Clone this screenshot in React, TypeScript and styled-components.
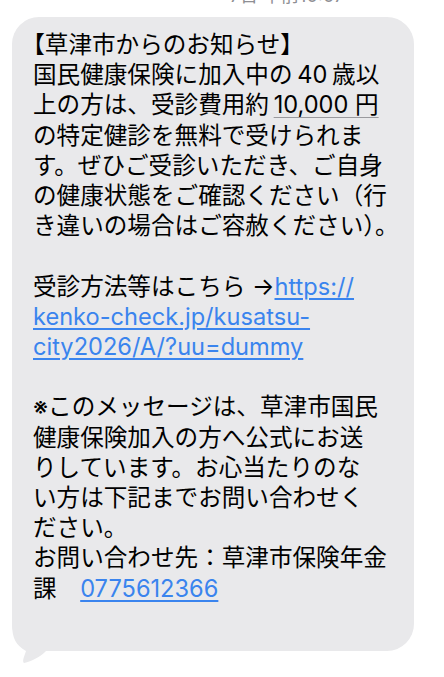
import React from 'react';
import styled, { createGlobalStyle } from 'styled-components';

const GlobalStyle = createGlobalStyle`
  html, body {
    margin: 0;
    padding: 0;
    background: #ffffff;
  }
  body {
    font-family: Inter, "Noto Sans CJK JP", sans-serif;
    -webkit-font-smoothing: antialiased;
  }
`;

const Screen = styled.div`
  width: 444px;
  height: 677px;
  overflow: hidden;
  background: #ffffff;
  display: flex;
  flex-direction: column;
`;

const Timestamp = styled.div`
  height: 5px;
  overflow: hidden;
  display: flex;
  justify-content: center;
  align-items: flex-end;
  padding-left: 130px;
  font-size: 18px;
  line-height: 18px;
  color: #8e8e93;
  margin-bottom: 12px;
`;

const Row = styled.div`
  padding: 0 30px 0 12px;
`;

const Bubble = styled.div`
  position: relative;
  background: #e9e9eb;
  border-radius: 27px;
  padding: 13px 18px 47px 21px;
  color: #000000;
  font-size: 23.6px;
  line-height: 30.2px;
`;

const Tail = styled.svg`
  position: absolute;
  left: 0;
  bottom: -12px;
  width: 50px;
  height: 40px;
`;

const Line = styled.div<{ $trim?: boolean }>`
  white-space: nowrap;
  min-height: 30.2px;
  margin-left: ${(p) => (p.$trim ? '-0.5em' : '0')};
`;

const Num = styled.span<{ $underline?: boolean }>`
  padding: 0 0.2em;
  ${(p) =>
    p.$underline &&
    `
    text-decoration: underline;
    text-decoration-color: #9a9a9e;
    text-decoration-thickness: 1px;
    text-underline-offset: 4px;
  `}
`;

const Link = styled.a`
  color: #3a84ee;
  text-decoration: underline;
  text-decoration-thickness: 1.5px;
  text-underline-offset: 3px;
`;

export default function App() {
  return (
    <>
      <GlobalStyle />
      <Screen>
        <Timestamp>7日 午前10:07</Timestamp>
        <Row>
          <Bubble>
            <Line $trim>【草津市からのお知らせ】</Line>
            <Line>
              国民健康保険に加入中の<Num>40</Num>歳以
            </Line>
            <Line>
              上の方は、受診費用約<Num $underline>10,000 円</Num>
            </Line>
            <Line>の特定健診を無料で受けられま</Line>
            <Line>す。ぜひご受診いただき、ご自身</Line>
            <Line>の健康状態をご確認ください（行</Line>
            <Line>き違いの場合はご容赦ください）。</Line>
            <Line />
            <Line>
              受診方法等はこちら →<Link>https://</Link>
            </Line>
            <Line>
              <Link>kenko-check.jp/kusatsu-</Link>
            </Line>
            <Line>
              <Link>city2026/A/?uu=dummy</Link>
            </Line>
            <Line />
            <Line>※このメッセージは、草津市国民</Line>
            <Line>健康保険加入の方へ公式にお送</Line>
            <Line>りしています。お心当たりのな</Line>
            <Line>い方は下記までお問い合わせく</Line>
            <Line>ださい。</Line>
            <Line>お問い合わせ先：草津市保険年金</Line>
            <Line>
              課　<Link>0775612366</Link>
            </Line>
            <Tail viewBox="0 0 50 40">
              <path
                d="M0 0 C0 16 4 22 14 28 C12 34 10 38 12 40 C20 38 28 34 34 28 C40 28 44 28 50 28 L50 0 Z"
                fill="#e9e9eb"
              />
            </Tail>
          </Bubble>
        </Row>
      </Screen>
    </>
  );
}
